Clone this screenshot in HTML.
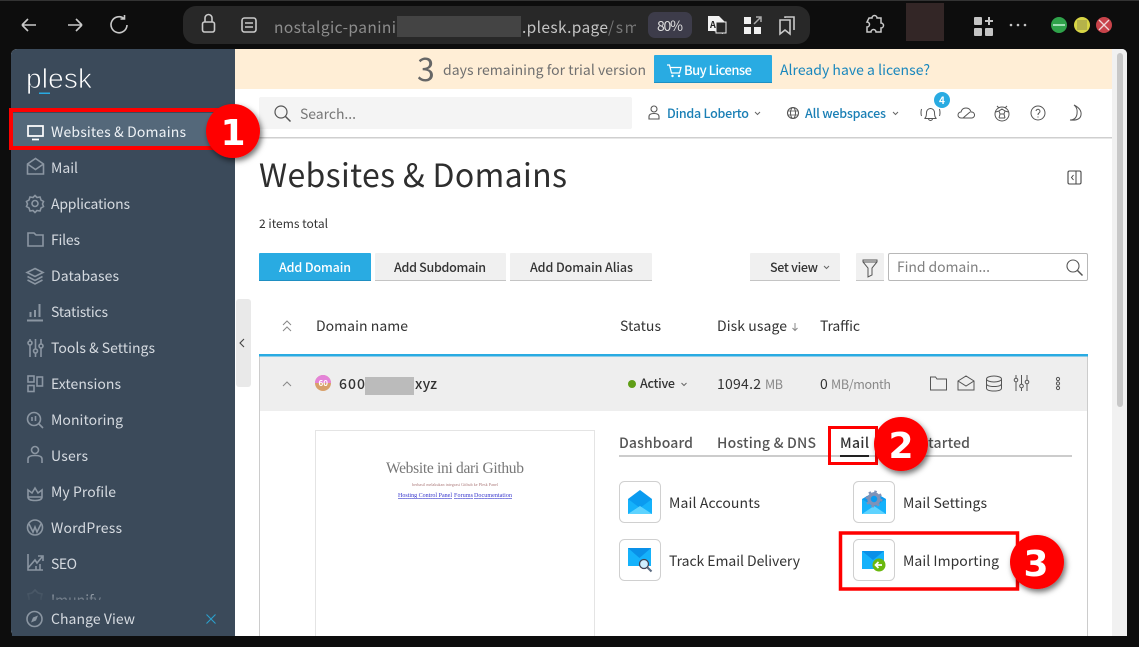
<!DOCTYPE html>
<html><head><meta charset="utf-8"><title>Plesk</title>
<style>
html,body{margin:0;padding:0;background:#0d0d0d;width:1139px;height:647px;overflow:hidden}
svg{display:block}
text{font-family:"Noto Sans CJK SC","Liberation Sans",sans-serif;font-size:14px;dominant-baseline:auto}
.s text{fill:#d5dae0}
.si *{fill:none;stroke:#8b96a2;stroke-width:1.6}
.ic *{fill:none;stroke:#555;stroke-width:1}
.b *{fill:none;stroke:#c9c9c9;stroke-width:1.6}
</style></head><body>
<svg width="1139" height="647" viewBox="0 0 1139 647" xmlns="http://www.w3.org/2000/svg">
<defs>
<filter id="sh" x="-30%" y="-30%" width="170%" height="170%"><feDropShadow dx="2" dy="3" stdDeviation="3" flood-color="#000" flood-opacity=".55"/></filter>
<linearGradient id="fade" x1="0" y1="0" x2="0" y2="1"><stop offset="0" stop-color="#3b4a5a" stop-opacity="0"/><stop offset="1" stop-color="#3b4a5a"/></linearGradient>
</defs>
<rect width="1139" height="647" fill="#0d0d0d"/>
<rect x="0" y="0" width="1139" height="1" fill="#333"/>
<!-- browser bar -->
<g class="b">
<path d="M22 25h14M22 25l6-6M22 25l6 6"/>
<path d="M68 25h14M82 25l-6-6M82 25l-6 6"/>
<path d="M127 25a8 8 0 1 1-3-6.500M124.500 15v4h-4"/>
</g>
<rect x="183" y="6" width="627" height="38" rx="13" fill="#282828"/>
<g class="b">
<rect x="202.500" y="22" width="12" height="10" rx="2"/><path d="M205 22v-4a3.500 3.500 0 0 1 7 0v4"/>
<rect x="242" y="18" width="14" height="14" rx="2.500"/><path d="M245 23h8M245 27h8"/>
</g>
<text x="274" y="33" fill="#8d8d8d" style="font-size:15.500px" textLength="122">nostalgic-panini</text>
<rect x="397" y="16" width="124" height="21" fill="#444"/>
<text x="522" y="33" fill="#c4c4c4" style="font-size:15.500px" textLength="86">.plesk.page</text>
<text x="608" y="33" fill="#777" style="font-size:15.500px" textLength="31">/sm</text>
<rect x="636" y="12" width="12" height="26" fill="#282828"/>
<rect x="648" y="12" width="44" height="26" rx="7" fill="#3d3c4a"/>
<text x="657" y="31" fill="#ddd" style="font-size:14px" textLength="26">80%</text>
<path d="M708 16h11l6 6h-2v12l-9-3h-6z" fill="#f2f2f2"/><rect x="716" y="22" width="10" height="11" fill="#282828" stroke="#eee"/>
<text x="710" y="28" fill="#222" style="font-size:9px;font-weight:700">A</text>
<g fill="#f0f0f0"><rect x="744" y="17" width="7" height="7"/><rect x="744" y="27" width="7" height="7"/><rect x="754" y="27" width="7" height="7"/></g><path d="M754 24l7-7M756 17h5v5" stroke="#aaa" stroke-width="1.500" fill="none"/>
<g class="b"><path d="M780 20h10v14l-5-4-5 4zM785 18v-1h9v13"/></g>
<path d="M870 20h3a2.500 2.500 0 0 1 5 0h4v5a2.500 2.500 0 0 1 0 5v4h-5a2.500 2.500 0 0 0-5 0h-4v-5a2.500 2.500 0 0 0 0-5z" transform="translate(-1 -2)" fill="none" stroke="#c9c9c9" stroke-width="1.500"/>
<rect x="906" y="3" width="38" height="38" fill="#332626"/>
<g fill="#c4c4c4"><rect x="974" y="17" width="8" height="8" rx="1"/><rect x="974" y="28" width="8" height="8" rx="1"/><rect x="985" y="28" width="8" height="8" rx="1"/><path d="M988 17h2v3h3v2h-3v3h-2v-3h-3v-2h3z"/></g>
<g fill="#c4c4c4"><circle cx="1011" cy="25" r="1.300"/><circle cx="1018" cy="25" r="1.300"/><circle cx="1025" cy="25" r="1.300"/></g>
<circle cx="1059" cy="25" r="8" fill="#2fa24a"/><path d="M1053 25h12" stroke="#dfe" stroke-width="1.300"/>
<circle cx="1082" cy="25" r="8" fill="#d8d545"/><rect x="1077" y="20" width="10" height="10" fill="#b5b24a"/>
<circle cx="1104" cy="25" r="8" fill="#c8434a"/><path d="M1099 20l10 10M1109 20l-10 10" stroke="#f0d8d8" stroke-width="1.300"/>
<!-- page -->
<path d="M17 49H1122a5 5 0 0 1 5 5V636H17a6 6 0 0 1-6-6V55a6 6 0 0 1 6-6z" fill="#fff"/>
<!-- scrollbar -->
<path d="M1112 49h10a5 5 0 0 1 5 5V636h-15z" fill="#f1f1f1"/>
<rect x="1117" y="53" width="6" height="354" rx="3" fill="#c8c8c8"/>
<!-- banner -->
<rect x="235" y="49" width="877" height="40" fill="#ffeed6"/>
<text x="417" y="81" fill="#666" style="font-size:32px" textLength="17">3</text>
<text x="443" y="75" fill="#707070" textLength="203">days remaining for trial version</text>
<rect x="654" y="55" width="118" height="28" rx="1" fill="#29abe2"/><rect x="654" y="82" width="118" height="1" fill="#1f8fc2"/>
<path d="M667 65h2.500l2 8h8l1.500-5.500h-11" fill="none" stroke="#fff" stroke-width="1.200"/><circle cx="672.500" cy="76" r="1.200" fill="#fff"/><circle cx="679" cy="76" r="1.200" fill="#fff"/>
<text x="684" y="75" fill="#fff" style="font-weight:500;font-size:13px" textLength="68">Buy License</text>
<text x="780" y="75" fill="#1a87bd" textLength="150">Already have a license?</text>
<!-- header -->
<rect x="259" y="97" width="373" height="32" rx="2" fill="#f4f4f4"/>
<circle cx="281" cy="112" r="6" fill="none" stroke="#555" stroke-width="1.200"/><path d="M285.500 116.500l5 5" stroke="#555" stroke-width="1.500"/>
<text x="300" y="119" fill="#777" textLength="56">Search...</text>
<circle cx="654" cy="109" r="3" fill="none" stroke="#555" stroke-width="1.100"/><path d="M649 119v-2.500q0-3 5-3t5 3v2.500z" fill="none" stroke="#555" stroke-width="1.100"/>
<text x="667" y="118" fill="#1a7fb5" style="font-size:12.500px;font-weight:500" textLength="82">Dinda Loberto</text>
<path d="M755 112l2.500 2.500 2.500-2.500" fill="none" stroke="#666"/>
<circle cx="793" cy="113" r="5.500" fill="none" stroke="#555" stroke-width="1.100"/><ellipse cx="793" cy="113" rx="2.500" ry="5.500" fill="none" stroke="#555"/><path d="M788 111h10M788 115h10" stroke="#555" stroke-width=".8"/>
<text x="805" y="118" fill="#1a7fb5" style="font-size:12.500px;font-weight:500" textLength="81">All webspaces</text>
<path d="M893 112l2.500 2.500 2.500-2.500" fill="none" stroke="#666"/>
<g class="ic">
<path d="M924.500 118.500q2-1 2-6a4 4 0 0 1 8 0q0 5 2 6zM921.500 109q-1 4 0 7M939.500 109q1 4 0 7M928.500 118.500a2 2 0 0 0 4 0"/>
<path d="M961 118a3 3 0 0 1 0-6q1-4 5-4t5 4a3 3 0 0 1 1 6zM963 118l7-6"/>
<circle cx="1002" cy="114" r="7"/><path d="M1002 109l3 2-1 3h-4l-1-3zM995.500 112l3.500-1M1008.500 112l-3.500-1M999 118l1-4M1005 118l-1-4M999 118h6M997 106l2 2M1007 106l-2 2"/>
<circle cx="1038" cy="113" r="7"/><path d="M1036 111a2 2 0 1 1 3 2q-1 .5-1 2M1038 116.500v1"/>
<path d="M1074 105q8 4 7 10t-11 5q6 0 7-6t-3-9z"/>
</g>
<circle cx="942" cy="100" r="8" fill="#29abe2"/><text x="939" y="104" fill="#fff" style="font-size:10px;font-weight:700">4</text>
<rect x="235" y="137" width="877" height="1.500" fill="#cfcfcf"/>
<!-- title -->
<text x="259" y="187" fill="#2e2e2e" style="font-size:32px" textLength="308">Websites &amp; Domains</text>
<rect x="1068" y="171" width="13" height="13" rx="1.500" fill="none" stroke="#444" stroke-width="1.100"/><path d="M1076 171v13M1073.500 175l-2 2.500 2 2.500" fill="none" stroke="#444"/>
<text x="259" y="228" fill="#333" style="font-size:12px" textLength="69">2 items total</text>
<!-- toolbar -->
<rect x="259" y="253" width="112" height="28" rx="1" fill="#29abe2"/><rect x="259" y="280" width="112" height="1" fill="#1f8fc2"/>
<text x="279" y="272" fill="#fff" style="font-size:12.500px;font-weight:500" textLength="72">Add Domain</text>
<g fill="#f0f0f0"><rect x="375" y="253" width="131" height="28" rx="1"/><rect x="510" y="253" width="142" height="28" rx="1"/><rect x="750" y="253" width="90" height="28" rx="1"/><rect x="856" y="253" width="28" height="28" rx="1"/></g>
<g fill="#c4c4c4"><rect x="375" y="280" width="131" height="1"/><rect x="510" y="280" width="142" height="1"/><rect x="750" y="280" width="90" height="1"/><rect x="856" y="280" width="28" height="1"/></g>
<g fill="#333" style="font-weight:500"><text x="394" y="272" style="font-size:12.500px" textLength="92">Add Subdomain</text>
<text x="530" y="272" style="font-size:12.500px" textLength="103">Add Domain Alias</text>
<text x="770" y="272" style="font-size:12.500px" textLength="48">Set view</text></g>
<path d="M824 266l2.500 2.500 2.500-2.500" fill="none" stroke="#666"/>
<path d="M863 260h14v2l-5 6v7l-4 2v-9l-5-6z" fill="none" stroke="#555" stroke-width="1"/><path d="M863 262h14" stroke="#555"/>
<rect x="888.500" y="253.500" width="199" height="27" rx="1.500" fill="#fff" stroke="#b8b8b8"/>
<text x="897" y="272" fill="#808080" textLength="93">Find domain...</text>
<circle cx="1073" cy="266" r="6" fill="none" stroke="#555" stroke-width="1.100"/><path d="M1077.500 270.500l5 5" stroke="#555" stroke-width="1.500"/>
<!-- table head -->
<path d="M283 325l4-4 4 4M283 331l4-4 4 4" fill="none" stroke="#888"/>
<text x="316" y="331" fill="#333" textLength="92">Domain name</text>
<text x="620" y="331" fill="#333" textLength="41">Status</text>
<text x="717" y="331" fill="#333" textLength="70">Disk usage</text>
<path d="M795 323v7M792.500 328l2.500 2.500 2.500-2.500" fill="none" stroke="#888"/>
<text x="820" y="331" fill="#333" textLength="40">Traffic</text>
<!-- row -->
<rect x="259.500" y="356" width="828" height="290" fill="#fff" stroke="#ccc"/>
<rect x="260" y="356" width="827" height="55" fill="#eee"/>
<rect x="259" y="354" width="829" height="2.500" fill="#29abe2"/>
<path d="M283 386l4-4 4 4" fill="none" stroke="#888"/>
<circle cx="323" cy="383" r="8" fill="#d8a06a"/><path d="M315 383a8 8 0 0 1 16 0z" fill="#e483d8"/>
<text x="318.500" y="386" fill="#fff" style="font-size:8px;font-weight:700">60</text>
<text x="339" y="389" fill="#333" style="font-weight:500" textLength="26">600</text>
<rect x="365" y="377" width="49" height="18" fill="#bbb"/>
<text x="415" y="389" fill="#333" style="font-weight:500" textLength="22">xyz</text>
<circle cx="632" cy="384" r="4" fill="#5f9e16"/>
<text x="640" y="388" fill="#333" style="font-size:12.500px;font-weight:500" textLength="35">Active</text>
<path d="M681.500 383l2.500 2.500 2.500-2.500" fill="none" stroke="#666"/>
<text x="717" y="389" fill="#333" textLength="44">1094.2</text>
<text x="765" y="389" fill="#888" style="font-size:12.500px" textLength="18">MB</text>
<text x="820" y="389" fill="#333" textLength="7">0</text>
<text x="831" y="389" fill="#888" style="font-size:12.500px" textLength="60">MB/month</text>
<g class="ic">
<path d="M930.500 377h5l1.500 2h9.500v11h-16z"/>
<path d="M958 381l8-5 8 5v9h-16zM958 381l8 5 8-5"/>
<ellipse cx="994" cy="379" rx="7.500" ry="3"/><path d="M986.500 379v9q0 3 7.500 3t7.500-3v-9M986.500 383.500q0 3 7.500 3t7.500-3"/>
<path d="M1016 375v16M1021.500 375v16M1027 375v16"/><circle cx="1016" cy="380" r="1.800" style="fill:#eee"/><circle cx="1021.500" cy="386" r="1.800" style="fill:#eee"/><circle cx="1027" cy="382" r="1.800" style="fill:#eee"/>
<circle cx="1058" cy="379" r="1.600"/><circle cx="1058" cy="383.500" r="1.600"/><circle cx="1058" cy="388" r="1.600"/>
</g>
<!-- preview -->
<path d="M315.500 637V430.500h279V637" fill="#fff" stroke="#e4e4e4"/>
<text x="386" y="473" fill="#777" style="font-family:'Liberation Serif',serif;font-size:15.500px" textLength="138">Website ini dari Github</text>
<text x="412" y="486" fill="#a77" style="font-family:'Liberation Serif',serif;font-size:4px" textLength="86">berhasil melakukan integrasi Github ke Plesk Panel</text>
<text x="398" y="497" fill="#3333cc" style="font-family:'Liberation Serif',serif;font-size:6px;text-decoration:underline" textLength="54">Hosting Control Panel</text>
<text x="454" y="497" fill="#3333cc" style="font-family:'Liberation Serif',serif;font-size:6px;text-decoration:underline" textLength="19">Forums</text>
<text x="474" y="497" fill="#3333cc" style="font-family:'Liberation Serif',serif;font-size:6px;text-decoration:underline" textLength="38">Documentation</text>
<!-- tabs -->
<text x="619" y="448" fill="#555" style="font-weight:500" textLength="74">Dashboard</text>
<text x="717" y="448" fill="#555" style="font-weight:500" textLength="99">Hosting &amp; DNS</text>
<text x="840" y="448" fill="#333" style="font-weight:500" textLength="29">Mail</text>
<text x="893" y="448" fill="#555" style="font-weight:500" textLength="77">Get Started</text>
<rect x="619" y="455" width="453" height="2" fill="#ccc"/>
<rect x="840" y="455" width="29" height="2" fill="#222"/>
<!-- mail items -->
<g fill="#fff" stroke="#d0d0d0"><rect x="619.500" y="481.500" width="41" height="41" rx="5"/><rect x="853.500" y="481.500" width="41" height="41" rx="5"/><rect x="619.500" y="539.500" width="41" height="41" rx="5"/><rect x="853.500" y="539.500" width="41" height="41" rx="5"/></g>
<path d="M628 499l12-9 12 9v15h-24z" fill="#0a9bf0"/><path d="M628 499l12 9 12-9v15h-24z" fill="#15b2fb"/><path d="M628 514l12-8 12 8z" fill="#5ed3ff"/>
<path d="M862 499l12-7 12 7v15h-24z" fill="#0a9bf0"/><path d="M862 499l12 8 12-8v15h-24z" fill="#15b2fb"/><path d="M862 514l12-8 12 8z" fill="#5ed3ff"/><circle cx="874" cy="499" r="5" fill="none" stroke="#7e92b8" stroke-width="3.500"/><circle cx="874" cy="499" r="7.500" fill="none" stroke="#7e92b8" stroke-width="2" stroke-dasharray="2.500 3.400"/>
<path d="M628 548h23v18h-23z" fill="#15b2fb"/><path d="M628 548h23l-11.500 10z" fill="#0a90e8"/><circle cx="644" cy="564" r="4.500" fill="#cfeeff" stroke="#445" stroke-width="1.300"/><path d="M647.500 567.500l4 4" stroke="#5a6a80" stroke-width="2"/>
<path d="M862 551h22v18h-22z" fill="#15b2fb"/><path d="M862 551h22l-11 9z" fill="#0a90e8"/><circle cx="879" cy="565" r="6.500" fill="#6bb80f"/><path d="M876 565h6M878.500 562l-3 3 3 3" fill="none" stroke="#fff" stroke-width="1.700"/>
<text x="669" y="508" fill="#333" textLength="91">Mail Accounts</text>
<text x="903" y="508" fill="#333" textLength="84">Mail Settings</text>
<text x="669" y="566" fill="#333" textLength="131">Track Email Delivery</text>
<text x="903" y="566" fill="#333" textLength="96">Mail Importing</text>
<!-- sidebar -->
<path d="M17 49H235V636H17a6 6 0 0 1-6-6V55a6 6 0 0 1 6-6z" fill="#3b4a5a"/>
<rect x="236" y="299" width="15" height="88" rx="3" fill="#e9e9e9"/>
<path d="M244 339l-4 4 4 4" fill="none" stroke="#444" stroke-width="1.100"/>
<text x="26" y="88" fill="#fff" stroke="#3b4a5a" stroke-width=".8" style="font-family:'Liberation Sans',sans-serif;font-size:28px" textLength="66">plesk</text>
<rect x="39" y="92.500" width="11" height="1.500" fill="#29abe2"/>
<rect x="12" y="113" width="223" height="34" fill="#54687a"/>
<g class="s">
<text x="51" y="137" fill="#eef" style="fill:#eef2f6" textLength="135">Websites &amp; Domains</text>
<text x="51" y="173" textLength="27">Mail</text>
<text x="51" y="209" textLength="79">Applications</text>
<text x="51" y="245" textLength="29">Files</text>
<text x="51" y="281" textLength="68">Databases</text>
<text x="51" y="317" textLength="57">Statistics</text>
<text x="51" y="353" textLength="104">Tools &amp; Settings</text>
<text x="51" y="389" textLength="70">Extensions</text>
<text x="51" y="425" textLength="72">Monitoring</text>
<text x="51" y="461" textLength="37">Users</text>
<text x="51" y="497" textLength="65">My Profile</text>
<text x="51" y="533" textLength="71">WordPress</text>
<text x="51" y="569" textLength="26">SEO</text>
<text x="51" y="605" textLength="50">Imunify</text>
</g>
<g class="si">
<path d="M28 126h15v10H28zM32 139.500h7" style="stroke:#fff;stroke-width:1.700"/>
<path d="M27.500 164l8-5.500 8 5.500v10h-16zM27.500 164l8 5.500 8-5.500"/>
<circle cx="35" cy="203.500" r="3"/><path d="M35 195.500l2 2 3-.5 1 3 2.500 1.500-1 2.500 1 2.500-2.500 1.500-1 3-3-.5-2 2-2-2-3 .5-1-3-2.500-1.500 1-2.500-1-2.500 2.500-1.500 1-3 3 .5z"/>
<path d="M28 233h6l2 2h7v11H28z"/>
<path d="M35 268.500l8 4-8 4-8-4zM27.500 276.500l7.500 4 7.500-4M27.500 280l7.500 4 7.500-4"/>
<path d="M27 320.500h16M30.500 317v-5M35 317v-7M39.500 317v-13" style="stroke-width:2"/>
<path d="M30 339v18M35.500 339v18M41 339v18"/><circle cx="30" cy="343" r="2" style="fill:#3b4a5a"/><circle cx="35.500" cy="351" r="2" style="fill:#3b4a5a"/><circle cx="41" cy="346" r="2" style="fill:#3b4a5a"/>
<rect x="28" y="376" width="6" height="6"/><rect x="28" y="385.500" width="6" height="6"/><rect x="37" y="377" width="5.500" height="9"/>
<circle cx="34" cy="419" r="6.500"/><path d="M39 424l4 4M32 417v4M35.500 416v5"/>
<circle cx="35" cy="450" r="3.500"/><path d="M28 463v-4q0-3.500 7-3.500t7 3.500v4"/>
<path d="M28 490l4 3 3-5 3 5 4-3v7H28zM28 497q0 3.500 7 3.500t7-3.500"/>
<circle cx="35" cy="527.500" r="7.500"/><path d="M29 524l4 8 2-5 2 5 4-8"/>
<path d="M28 554v16h15M28 568l7-8 2 3 5-6M38 556h5v5M36 570v-4M40 570v-6"/>
<g opacity=".25"><path d="M35 590l3 3 4 1-1 4v5H29v-5l-1-4 4-1z"/></g>
</g>
<rect x="12" y="586" width="223" height="20" fill="url(#fade)"/>
<rect x="12" y="600" width="223" height="36" fill="#3b4a5a"/>
<circle cx="34.500" cy="619" r="7.500" fill="none" stroke="#8b96a2" stroke-width="1.600"/><path d="M38 615.500l-2 5-5 2 2-5z" fill="#8b96a2"/>
<text x="51" y="624" fill="#d5dae0" textLength="84">Change View</text>
<path d="M206.500 614.500l9 9M215.500 614.500l-9 9" stroke="#2ca0cc" stroke-width="1.100"/>
<!-- bottom window edge -->
<rect x="236" y="636" width="903" height="11" fill="#0d0d0d"/>
<!-- annotations -->
<rect x="11" y="110" width="207" height="38" fill="none" stroke="#f00" stroke-width="4"/>
<rect x="829.500" y="427.500" width="47" height="36" fill="none" stroke="#f00" stroke-width="3"/>
<rect x="840.500" y="533" width="177" height="56" fill="none" stroke="#f00" stroke-width="3.500"/>
<g filter="url(#sh)"><circle cx="233" cy="131" r="27" fill="#f00"/></g>
<text x="233" y="145" fill="#fff" text-anchor="middle" style="font-family:'DejaVu Sans',sans-serif;font-size:36px;font-weight:700">1</text>
<g filter="url(#sh)"><circle cx="901" cy="444" r="27" fill="#f00"/></g>
<text x="901" y="458" fill="#fff" text-anchor="middle" style="font-family:'DejaVu Sans',sans-serif;font-size:36px;font-weight:700">2</text>
<g filter="url(#sh)"><circle cx="1037" cy="562" r="27" fill="#f00"/></g>
<text x="1036" y="576" fill="#fff" text-anchor="middle" style="font-family:'DejaVu Sans',sans-serif;font-size:36px;font-weight:700">3</text>
</svg>
</body></html>
